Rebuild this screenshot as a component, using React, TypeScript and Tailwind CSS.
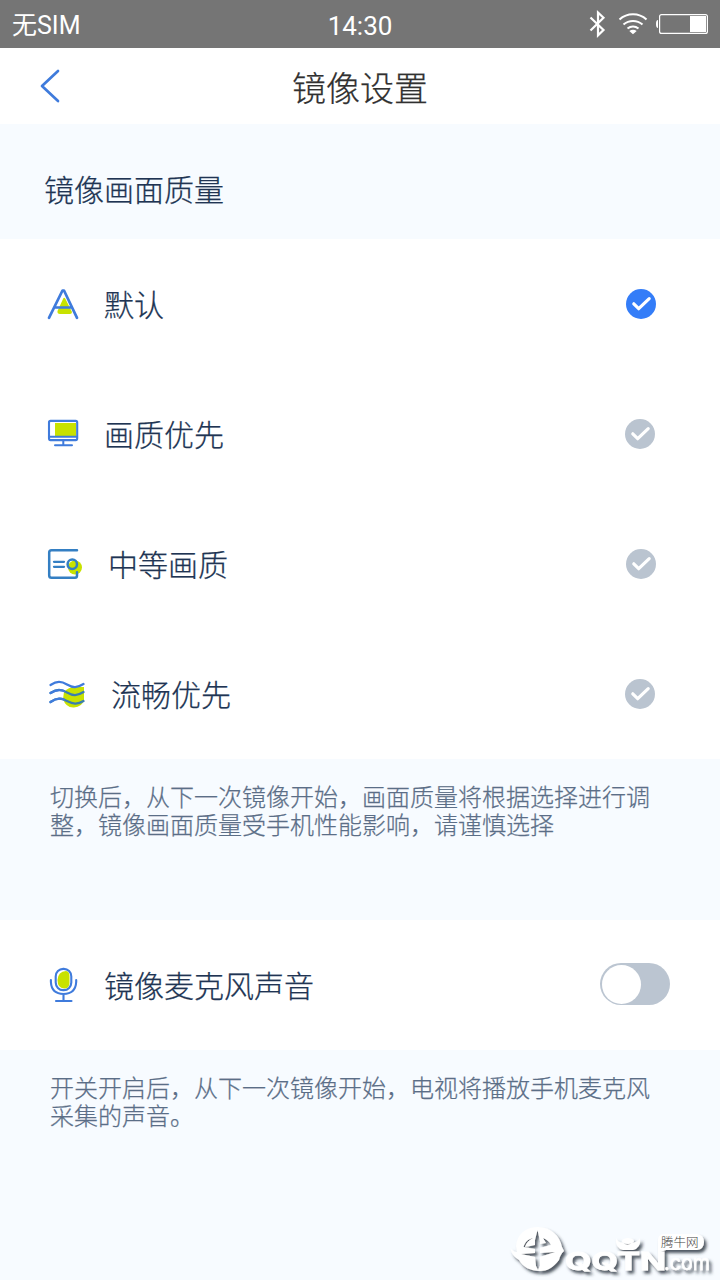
import type { ReactNode } from "react";

const BLUE = "#3f7bdc";
const LIME = "#c8e200";

function StatusBar() {
  return (
    <div className="grid h-12 grid-cols-3 items-center bg-[#757575] font-['Roboto','Noto_Sans_CJK_SC',sans-serif] font-normal text-white [-webkit-text-stroke:0px]">
      <span className="pt-[3px] pl-[12px] text-[25px] leading-none">无SIM</span>
      <span className="pt-[4px] text-center text-[26px] leading-none">14:30</span>
      <svg className="h-12 w-36 justify-self-end" viewBox="576 0 144 48" fill="none" stroke="#fff">
        <path d="M590.5 17.5 L603.5 30 L598 35.3 V12.5 L603.5 17.8 L590.5 30.5" strokeWidth="2.2" />
        <path d="M619.5 19.5 A20 20 0 0 1 646.5 19.5 M623.5 24.5 A14.5 14.5 0 0 1 642.5 24.5 M627.5 28.5 A9 9 0 0 1 638.5 28.5" strokeWidth="2.1" />
        <path d="M629.3 31 Q633 28.6 636.7 31 L633 34.2Z" fill="#fff" stroke="none" />
        <rect x="659.6" y="14.6" width="47.8" height="18.8" rx="2" strokeWidth="1.2" />
        <rect x="690" y="16" width="16" height="16" fill="#fff" stroke="none" />
        <path d="M658 20 Q656 20 656 24 Q656 28 658 28Z" fill="#fff" stroke="none" />
      </svg>
    </div>
  );
}

function LetterIcon() {
  return (
    <svg className="h-9 w-10" viewBox="44 286 40 36" fill="none">
      <path d="M63 299 Q64 296.500 65.500 299 L72 312 Q72 314 70 314 H60 Q57 314 57.500 311Z" fill={LIME} />
      <path d="M49 317.800 L62.500 290.500 H64 L77 317.800 M55.500 307.500 H71.500" stroke={BLUE} strokeWidth="2.700" strokeLinecap="round" strokeLinejoin="round" />
    </svg>
  );
}

function MonitorIcon() {
  return (
    <svg className="h-9 w-10" viewBox="44 416 40 36" fill="none">
      <rect x="55" y="423" width="21" height="13" fill={LIME} />
      <g stroke={BLUE} strokeLinecap="round">
        <rect x="49" y="420.900" width="28.200" height="19.200" rx="1.500" strokeWidth="2.100" />
        <path d="M49 436.800 H77" strokeWidth="1.900" />
        <path d="M63.300 441 V445 M55 445.300 H72" strokeWidth="2" />
      </g>
    </svg>
  );
}

function CardIcon() {
  return (
    <svg className="h-9 w-10" viewBox="44 546 40 36" fill="none">
      <circle cx="75" cy="567.500" r="7" fill={LIME} />
      <g stroke="#347fc3" strokeWidth="2.500" strokeLinecap="round">
        <path d="M77 550.200 H51.500 Q49.200 550.200 49.200 552.500 V575.500 Q49.200 577.800 51.500 577.800 H75 Q77 577.800 77 575.500 V572.300" />
        <path d="M54 561.800 H64 M54 566.800 H64" strokeWidth="2.300" />
        <circle cx="72.300" cy="564.200" r="4.700" />
      </g>
    </svg>
  );
}

function WavesIcon() {
  return (
    <svg className="h-9 w-10" viewBox="44 676 40 36" fill="none" overflow="visible">
      <path d="M64 692 Q69 687 74 687 H84 V700 Q82 707 74 707.500 Q66 708 63 699Z" fill={LIME} />
      <g stroke={BLUE} strokeWidth="2.300" strokeLinecap="round">
        <path d="M50.500 685 C57 681 61 681 67 684.500 S77 688 83.500 684" />
        <path d="M50.500 693 C57 689 61 689 67 692.500 S77 696 83.500 692" stroke="#397eaf" />
        <path d="M50.500 702 C57 697.500 61 698 67 701 S77 705 83.500 701" stroke="#397eaf" />
        <path d="M50.500 693 C56 689.700 60 689.500 64 691 M50.500 702 C56 698.200 60 698 64 699.500" />
      </g>
    </svg>
  );
}

function MicIcon() {
  return (
    <svg className="mt-[2px] h-9 w-10" viewBox="44 967 40 36" fill="none">
      <path d="M57.500 980 Q58 971.500 66 971 Q69.500 971.500 69.500 976 V983 Q69.500 988.500 64 988.500 Q57.500 988 57.500 980Z" fill={LIME} />
      <g stroke={BLUE} strokeWidth="2.100" strokeLinecap="round">
        <rect x="55.700" y="968.900" width="15.600" height="21.200" rx="7.500" />
        <path d="M50.900 980 V982 Q51.500 993.800 63.500 994 Q75.500 993.800 76.200 982 V980 M63.500 994 V1001 M56 1001 H71.500" />
      </g>
    </svg>
  );
}

function CheckMark({ selected }: { selected: boolean }) {
  return (
    <svg className="size-[30px]" viewBox="0 0 30 30" fill="none">
      <circle cx="15" cy="15" r="15" fill={selected ? "#347df8" : "#bac4d0"} />
      <path d="M7.800 14.800 L12.700 19.700 L23.200 9.700" stroke="#fff" strokeWidth="3.200" strokeLinecap="round" strokeLinejoin="round" />
    </svg>
  );
}

interface Quality {
  label: string;
  icon: ReactNode;
  textPad: string;
  rightPad: string;
}

const qualities: Quality[] = [
  { label: "默认", icon: <LetterIcon />, textPad: "pl-5", rightPad: "pr-16" },
  { label: "画质优先", icon: <MonitorIcon />, textPad: "pl-5", rightPad: "pr-[65px]" },
  { label: "中等画质", icon: <CardIcon />, textPad: "pl-6", rightPad: "pr-16" },
  { label: "流畅优先", icon: <WavesIcon />, textPad: "pl-[27px]", rightPad: "pr-[65px]" },
];

function Watermark() {
  return (
    <svg className="absolute right-0 bottom-0 h-[70px] w-[220px] [-webkit-text-stroke:0px]" viewBox="500 1210 220 70">
      <defs>
        <filter id="shade" x="-10%" y="-20%" width="125%" height="150%">
          <feDropShadow dx="2.5" dy="3" stdDeviation="1.7" floodColor="#27313b" floodOpacity="0.8" />
        </filter>
      </defs>
      <g filter="url(#shade)" fill="#fff">
        <path
          fillRule="evenodd"
          d="M516 1246 C517 1234 526 1227 538 1227 C551 1227 560 1236 562 1247 L564 1251 C561 1254 560 1256 559 1260 C553 1268 547 1271 540 1271 C530 1271 523 1267 519 1260 C514 1257 511 1253 510.500 1248 C512 1250 514 1252 517 1252Z M537.500 1230 L535 1240 V1245 L525 1247 C526 1243 529 1240 533 1238 C528 1239 525 1242 523.500 1247 L535 1249 V1253 L521 1254 L535 1257 L536 1266 L538 1270 L540 1266 V1257 L555 1252 L540 1253 V1248 L551 1245 C549 1241 546 1239 543 1238 L546 1243 L540 1244 V1241Z"
        />
        <g fontFamily="Inter, sans-serif" fontWeight="700" stroke="#fff" strokeWidth="0.8">
          <text x="565" y="1270" fontSize="24" textLength="53" lengthAdjust="spacingAndGlyphs">QQ</text>
          <text x="617" y="1270" fontSize="24" textLength="49" lengthAdjust="spacingAndGlyphs">TN</text>
        </g>
        <text x="664" y="1270" fontFamily="Inter, sans-serif" fontSize="21" fontWeight="400" stroke="#fff" strokeWidth="0.4" textLength="46" lengthAdjust="spacingAndGlyphs">.com</text>
        <path d="M616 1238 Q618 1243 623 1242.500 Q627 1247 632 1242.500 Q637 1243 640 1238 Q641 1248 633 1250 H623 Q615 1248 616 1238Z" />
        <ellipse cx="628" cy="1241" rx="6" ry="3" />
        <path d="M663 1234 H697 Q704 1235 704 1242 Q704 1249 697 1250 H666 L658 1253 V1240 Q658 1235 663 1234Z" />
      </g>
      <text x="661" y="1246.500" fontFamily="'Noto Sans CJK SC', sans-serif" fontWeight="300" fontSize="12.500" fill="#444">腾牛网</text>
    </svg>
  );
}

export default function App() {
  return (
    <div className="relative flex h-[1280px] w-[720px] flex-col overflow-hidden bg-[#f7fbff] font-['Noto_Sans_CJK_SC',sans-serif] font-light text-[#203453] [-webkit-text-stroke:0.25px]">
      <StatusBar />
      <header className="grid h-[76px] grid-cols-[72px_1fr_72px] items-center bg-white">
        <svg className="h-10 w-[72px]" viewBox="0 66 72 40" fill="none">
          <path d="M58 71 L42 86 L58 101" stroke={BLUE} strokeWidth="2.700" strokeLinecap="round" strokeLinejoin="round" />
        </svg>
        <h1 className="pt-px text-center text-[34px] leading-none font-light text-[#303030]">镜像设置</h1>
      </header>
      <h2 className="flex h-[115px] items-center pt-3 pl-11 text-[30px] leading-none font-light">镜像画面质量</h2>
      <main className="flex h-[520px] flex-col bg-white">
        {qualities.map((quality, index) => (
          <div key={quality.label} className={`flex h-[130px] items-center pl-11 ${quality.rightPad}`}>
            {quality.icon}
            <span className={`flex-1 pb-[2px] text-[30px] leading-none ${quality.textPad}`}>{quality.label}</span>
            <CheckMark selected={index === 0} />
          </div>
        ))}
      </main>
      <p className="h-[161px] pt-[23px] pl-[50px] text-2xl leading-7 text-[#5b6e87]">
        切换后，从下一次镜像开始，画面质量将根据选择进行调
        <br />
        整，镜像画面质量受手机性能影响，请谨慎选择
      </p>
      <section className="flex h-[130px] items-center bg-white pr-[50px] pb-[2px] pl-11">
        <MicIcon />
        <span className="flex-1 pl-5 text-[30px] leading-none">镜像麦克风声音</span>
        <button type="button" aria-label="镜像麦克风声音" className="flex h-[42px] w-[70px] items-center rounded-full bg-[#bbc5d1] pl-[2px]">
          <span className="size-[39px] rounded-full bg-white" />
        </button>
      </section>
      <p className="pt-[23px] pl-[50px] text-2xl leading-7 text-[#5b6e87]">
        开关开启后，从下一次镜像开始，电视将播放手机麦克风
        <br />
        采集的声音。
      </p>
      <Watermark />
    </div>
  );
}
